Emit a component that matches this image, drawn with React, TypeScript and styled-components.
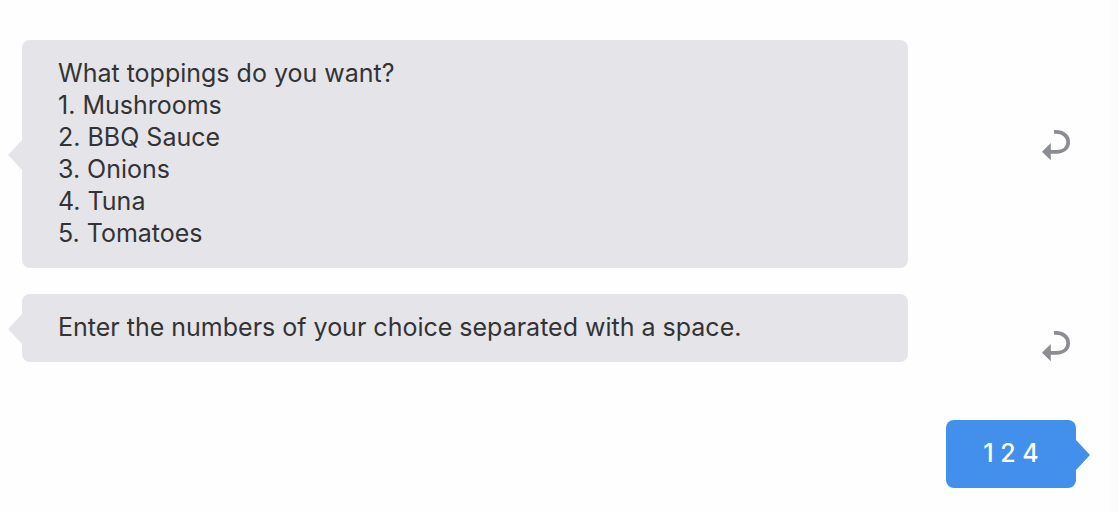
import React from "react";
import styled, { createGlobalStyle } from "styled-components";

const GlobalStyle = createGlobalStyle`
  * { box-sizing: border-box; }
  body { margin: 0; background: #fefefe; font-family: Inter, "Liberation Sans", sans-serif; }
`;

const Chat = styled.main`
  display: flex;
  flex-direction: column;
  min-height: 100vh;
  padding: 40px 34px 24px 22px;
  border-right: 8px solid #fbfbfb;
`;

const BotRow = styled.div<{ $last?: boolean }>`
  display: flex;
  justify-content: space-between;
  align-items: ${(p) => (p.$last ? "flex-end" : "center")};
  margin-bottom: ${(p) => (p.$last ? 58 : 26)}px;
`;

const UserRow = styled.div`
  display: flex;
  justify-content: flex-end;
`;

const Bubble = styled.div<{ $user?: boolean }>`
  position: relative;
  flex: 0 1 ${(p) => (p.$user ? "auto" : "886px")};
  min-width: 130px;
  padding: 17px 36px 19px;
  border-radius: 8px;
  font-size: 25px;
  line-height: 32px;
  font-weight: ${(p) => (p.$user ? 500 : 400)};
  text-align: ${(p) => (p.$user ? "center" : "left")};
  color: ${(p) => (p.$user ? "#fff" : "#333335")};
  background: ${(p) => (p.$user ? "#428fec" : "#e5e4e9")};

  &::after {
    content: "";
    position: absolute;
    top: 50%;
    ${(p) => (p.$user ? "left: 100%;" : "right: 100%;")}
    margin-top: -14px;
    border: solid transparent;
    border-width: 15px 14px;
    ${(p) => (p.$user ? "border-left-color: #428fec; border-right: 0;" : "border-right-color: #e5e4e9; border-left: 0;")}
  }
`;

const Line = styled.p`
  margin: 0;
`;

const Options = styled.ol`
  margin: 0;
  padding: 0;
  list-style: none;
`;

const ReplyButton = styled.button<{ $raised?: boolean }>`
  display: flex;
  margin-right: 4px;
  padding: 0 0 ${(p) => (p.$raised ? 18 : 0)}px;
  border: 0;
  background: none;
  color: #8b8d92;
`;

const ReplyIcon = () => (
  <svg width="32" height="32" viewBox="0 0 32 32" aria-hidden="true">
    <path d="M14 2.9h1.8C23 2.9 28.2 7 28.2 13S23.5 22.8 16.5 22.8H9" fill="none" stroke="currentColor" strokeWidth="3.7" />
    <path d="M2 22.7l8.8-8.7v17.2z" fill="currentColor" />
  </svg>
);

const toppings = ["Mushrooms", "BBQ Sauce", "Onions", "Tuna", "Tomatoes"];

export default function App() {
  return (
    <>
      <GlobalStyle />
      <Chat>
        <BotRow>
          <Bubble>
            <Line>What toppings do you want?</Line>
            <Options>
              {toppings.map((name, i) => (
                <li key={name}>{`${i + 1}. ${name}`}</li>
              ))}
            </Options>
          </Bubble>
          <ReplyButton $raised type="button" aria-label="Reply to toppings question"><ReplyIcon /></ReplyButton>
        </BotRow>
        <BotRow $last>
          <Bubble>
            <Line>Enter the numbers of your choice separated with a space.</Line>
          </Bubble>
          <ReplyButton type="button" aria-label="Reply to instructions"><ReplyIcon /></ReplyButton>
        </BotRow>
        <UserRow>
          <Bubble $user>
            <Line>1 2 4</Line>
          </Bubble>
        </UserRow>
      </Chat>
    </>
  );
}
